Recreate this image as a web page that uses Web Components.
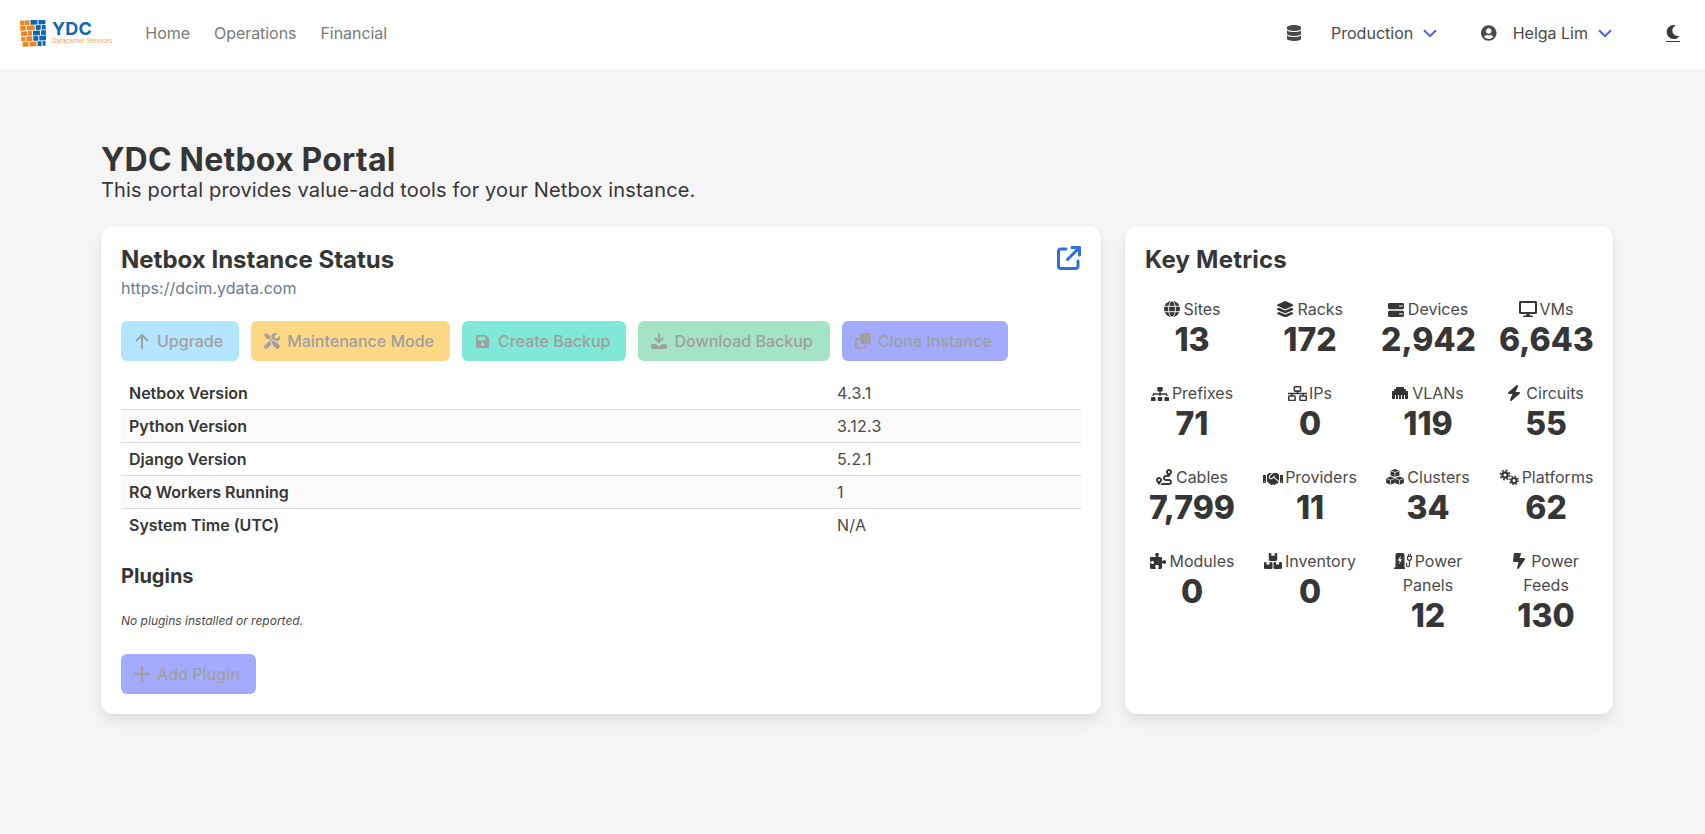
<!DOCTYPE html>
<html>
<head>
<meta charset="utf-8">
<title>YDC Netbox Portal</title>
<style>
  html, body { margin: 0; height: 100%; background: #f5f5f5; }
  body { font-family: Inter, "Liberation Sans", sans-serif; font-size: 16px; color: #363636; }
</style>
</head>
<body>
<ydc-navbar></ydc-navbar>
<ydc-page></ydc-page>

<script>
const ICONS = {
  database: ['0 0 448 512', '<path d="M448 73.143v45.714C448 159.143 347.667 192 224 192S0 159.143 0 118.857V73.143C0 32.857 100.333 0 224 0s224 32.857 224 73.143zM448 176v102.857C448 319.143 347.667 352 224 352S0 319.143 0 278.857V176c48.125 33.143 136.208 48.572 224 48.572S399.874 209.143 448 176zm0 160v102.857C448 479.143 347.667 512 224 512S0 479.143 0 438.857V336c48.125 33.143 136.208 48.572 224 48.572S399.874 369.143 448 336z"/>'],
  user: ['0 0 496 512', '<path d="M248 8C111 8 0 119 0 256s111 248 248 248 248-111 248-248S385 8 248 8zm0 96c48.6 0 88 39.4 88 88s-39.4 88-88 88-88-39.4-88-88 39.4-88 88-88zm0 344c-58.7 0-111.3-26.6-146.5-68.2 18.8-35.4 55.6-59.8 98.5-59.8 2.4 0 4.8.4 7.1 1.1 13 4.2 26.6 6.9 40.9 6.9 14.3 0 28-2.7 40.9-6.9 2.3-.7 4.7-1.1 7.1-1.1 42.9 0 79.7 24.4 98.5 59.8C359.3 421.4 306.7 448 248 448z"/>'],
  moon: ['0 0 512 512', '<path d="M283.211 512c78.962 0 151.079-35.925 198.857-94.792 7.068-8.708-.639-21.43-11.562-19.35-124.203 23.654-238.262-71.576-238.262-196.954 0-72.222 38.662-138.635 101.498-174.394 9.686-5.512 7.25-20.197-3.756-22.23A258.156 258.156 0 0 0 283.211 0c-141.309 0-256 114.511-256 256 0 141.309 114.511 256 256 256z"/>'],
  chevron: ['0 0 14 9', '<path d="M1 1.200l6 6 6-6" fill="none" stroke="currentColor" stroke-width="2"/>'],
  external: ['0 0 512 512', '<path d="M320 0c-17.7 0-32 14.3-32 32s14.3 32 32 32h82.7L201.4 265.4c-12.5 12.5-12.5 32.8 0 45.3s32.8 12.5 45.3 0L448 109.3V192c0 17.7 14.3 32 32 32s32-14.3 32-32V32c0-17.7-14.3-32-32-32H320zM80 32C35.8 32 0 67.8 0 112V432c0 44.2 35.8 80 80 80H400c44.2 0 80-35.8 80-80V320c0-17.7-14.3-32-32-32s-32 14.3-32 32V432c0 8.8-7.2 16-16 16H80c-8.8 0-16-7.2-16-16V112c0-8.8 7.2-16 16-16H192c17.7 0 32-14.3 32-32s-14.3-32-32-32H80z"/>'],
  up: ['0 0 14 16', '<path d="M7 15V2M1.500 7.500L7 2l5.500 5.500" fill="none" stroke="currentColor" stroke-width="2" stroke-linecap="round" stroke-linejoin="round"/>'],
  plus: ['0 0 14 14', '<path d="M7 1v12M1 7h12" fill="none" stroke="currentColor" stroke-width="2" stroke-linecap="round"/>'],
  tools: ['0 0 512 512', '<path d="M501.1 395.7L384 278.6c-23.1-23.1-57.6-27.6-85.4-13.9L192 158.1V96L64 0 0 64l96 128h62.1l106.6 106.6c-13.6 27.8-9.2 62.3 13.9 85.4l117.1 117.1c14.6 14.6 38.2 14.6 52.7 0l52.7-52.7c14.5-14.6 14.5-38.2 0-52.7zM331.7 225c28.3 0 54.9 11 74.9 31l19.4 19.4c15.8-6.9 30.8-16.5 43.8-29.5 37.1-37.1 49.7-89.3 37.9-136.7-2.2-9-13.5-12.1-20.1-5.5l-74.4 74.4-67.9-11.3L334 98.9l74.4-74.4c6.6-6.6 3.4-17.9-5.7-20.2-47.4-11.7-99.6.9-136.6 37.9-28.5 28.5-41.9 66.1-41.2 103.6l82.1 82.1c8.1-1.9 16.5-2.9 24.7-2.9zm-103.9 82l-56.7-56.7L18.7 402.8c-25 25-25 65.5 0 90.5s65.5 25 90.5 0l123.6-123.6c-7.6-19.9-9.9-41.6-5-62.7zM64 472c-13.2 0-24-10.8-24-24 0-13.3 10.7-24 24-24s24 10.7 24 24c0 13.2-10.7 24-24 24z"/>'],
  save: ['0 0 448 512', '<path d="M433.941 129.941l-83.882-83.882A48 48 0 0 0 316.118 32H48C21.49 32 0 53.49 0 80v352c0 26.51 21.49 48 48 48h352c26.51 0 48-21.49 48-48V163.882a48 48 0 0 0-14.059-33.941zM224 416c-35.346 0-64-28.654-64-64 0-35.346 28.654-64 64-64s64 28.654 64 64c0 35.346-28.654 64-64 64zm96-304.52V212c0 6.627-5.373 12-12 12H76c-6.627 0-12-5.373-12-12V108c0-6.627 5.373-12 12-12h228.52c3.183 0 6.235 1.264 8.485 3.515l3.48 3.48A11.996 11.996 0 0 1 320 111.48z"/>'],
  download: ['0 0 16 16', '<path d="M8 .5v8M4.400 5.500L8 9.200l3.600-3.700" fill="none" stroke="currentColor" stroke-width="1.800" stroke-linecap="round" stroke-linejoin="round"/><path d="M1.500 11h3.300l1.700 1.600a2.100 2.100 0 0 0 3 0l1.700-1.600h3.300c.8 0 1.500.7 1.500 1.500v2c0 .8-.7 1.500-1.500 1.500h-13C.7 16 0 15.300 0 14.500v-2C0 11.700.7 11 1.500 11z"/>'],
  clone: ['0 0 512 512', '<path d="M288 448H64V224h64V160H64c-35.3 0-64 28.7-64 64V448c0 35.3 28.7 64 64 64H288c35.3 0 64-28.7 64-64V384H288v64zm-64-96H448c35.3 0 64-28.7 64-64V64c0-35.3-28.7-64-64-64H224c-35.3 0-64 28.700-64 64V288c0 35.3 28.700 64 64 64z"/>'],
  globe: ['0 0 16 16', '<circle cx="8" cy="8" r="8"/><g fill="none" stroke="#fff" stroke-width=".9"><ellipse cx="8" cy="8" rx="3.400" ry="8"/><path d="M0 5.300h16M0 10.700h16"/></g>'],
  layers: ['0 0 512 512', '<path d="M12.410 148.020l232.940 105.670c6.800 3.090 14.490 3.090 21.290 0l232.940-105.670c16.550-7.510 16.550-32.520 0-40.030L266.650 2.310a25.607 25.607 0 0 0-21.290 0L12.410 107.980c-16.550 7.510-16.550 32.530 0 40.040zm487.180 88.280l-58.090-26.330-161.640 73.270c-7.560 3.430-15.590 5.170-23.860 5.170s-16.290-1.740-23.860-5.170L70.510 209.970l-58.100 26.330c-16.550 7.500-16.550 32.500 0 40l232.940 105.590c6.800 3.080 14.490 3.080 21.290 0L499.590 276.300c16.550-7.500 16.550-32.500 0-40zm0 127.800l-57.870-26.230-161.860 73.370c-7.560 3.430-15.590 5.170-23.860 5.170s-16.290-1.740-23.860-5.170L70.290 337.870 12.410 364.100c-16.550 7.500-16.550 32.500 0 40l232.940 105.590c6.800 3.080 14.490 3.080 21.290 0L499.590 404.100c16.550-7.500 16.550-32.500 0-40z"/>'],
  server: ['0 0 16 14', '<rect y="0" width="16" height="6.200" rx="1.400"/><rect y="7.800" width="16" height="6.200" rx="1.400"/><g fill="#fff"><circle cx="12" cy="3.100" r=".8"/><circle cx="14" cy="3.100" r=".8"/><circle cx="12" cy="10.900" r=".8"/><circle cx="14" cy="10.900" r=".8"/></g>'],
  desktop: ['0 0 576 512', '<path d="M528 0H48C21.500 0 0 21.500 0 48v320c0 26.500 21.500 48 48 48h192l-16 48h-72c-13.300 0-24 10.700-24 24s10.700 24 24 24h272c13.300 0 24-10.700 24-24s-10.700-24-24-24h-72l-16-48h192c26.500 0 48-21.500 48-48V48c0-26.500-21.500-48-48-48zm-16 352H64V64h448v288z"/>'],
  sitemap: ['0 0 640 512', '<path d="M128 352H32c-17.670 0-32 14.330-32 32v96c0 17.670 14.330 32 32 32h96c17.670 0 32-14.330 32-32v-96c0-17.670-14.330-32-32-32zm-24-80h192v48h48v-48h192v48h48v-57.590c0-21.170-17.230-38.410-38.410-38.410H344v-64h40c17.670 0 32-14.330 32-32V32c0-17.670-14.330-32-32-32H256c-17.670 0-32 14.330-32 32v96c0 17.670 14.330 32 32 32h40v64H94.410C73.230 224 56 241.230 56 262.410V320h48v-48zm264 80h-96c-17.670 0-32 14.330-32 32v96c0 17.670 14.330 32 32 32h96c17.670 0 32-14.330 32-32v-96c0-17.670-14.330-32-32-32zm240 0h-96c-17.670 0-32 14.330-32 32v96c0 17.670 14.330 32 32 32h96c17.670 0 32-14.330 32-32v-96c0-17.670-14.330-32-32-32z"/>'],
  network: ['0 0 20 16', '<g fill="none" stroke="currentColor" stroke-width="1.600"><rect x="6.700" y=".8" width="6.600" height="4.600" rx=".6"/><rect x=".8" y="10.600" width="6.600" height="4.600" rx=".6"/><rect x="12.600" y="10.600" width="6.600" height="4.600" rx=".6"/><path d="M10 5.300V8M4 10.700V8h12v2.700M0 8h20"/></g>'],
  ethernet: ['0 0 512 512', '<path d="M496 192h-48v-48c0-8.800-7.200-16-16-16h-48V80c0-8.800-7.200-16-16-16H144c-8.800 0-16 7.200-16 16v48H80c-8.800 0-16 7.200-16 16v48H16c-8.800 0-16 7.200-16 16v224c0 8.800 7.200 16 16 16h80V320h32v128h64V320h32v128h64V320h32v128h64V320h32v128h80c8.800 0 16-7.200 16-16V208c0-8.800-7.200-16-16-16z"/>'],
  bolt: ['32 0 384 512', '<path d="M349.400 44.600c5.900-13.700 1.500-29.700-10.600-38.500s-28.600-8-39.900 1.800l-256 224c-10 8.800-13.600 22.900-8.900 35.300S50.700 288 64 288H175.500L98.600 467.400c-5.900 13.700-1.500 29.700 10.600 38.500s28.600 8 39.900-1.800l256-224c10-8.800 13.600-22.900 8.900-35.300s-16.600-20.700-30-20.700H272.500L349.400 44.600z"/>'],
  boltfeed: ['0 0 384 512', '<path d="M0 256L28.500 28c2-16 15.600-28 31.800-28H228.900c15 0 27.100 12.100 27.100 27.100c0 3.200-.6 6.500-1.700 9.500L208 160H347.300c20.200 0 36.700 16.400 36.700 36.700c0 7.400-2.200 14.600-6.400 20.700l-192.200 281c-5.900 8.600-15.600 13.700-25.900 13.700h-2.900c-15.700 0-28.500-12.800-28.500-28.500c0-2.300 .3-4.600 .9-6.900L176 288H32c-17.700 0-32-14.300-32-32z"/>'],
  route: ['0 0 512 512', '<path d="M416 320h-96c-17.600 0-32-14.400-32-32s14.400-32 32-32h96s96-107 96-160-43-96-96-96-96 43-96 96c0 25.500 22.200 63.400 45.300 96H320c-52.900 0-96 43.100-96 96s43.100 96 96 96h96c17.600 0 32 14.400 32 32s-14.400 32-32 32H185.500c-16 24.800-33.800 47.700-47.300 64H416c52.900 0 96-43.100 96-96s-43.100-96-96-96zm0-256c17.700 0 32 14.300 32 32s-14.300 32-32 32-32-14.300-32-32 14.300-32 32-32zM96 256c-53 0-96 43-96 96s96 160 96 160 96-107 96-160-43-96-96-96zm0 128c-17.700 0-32-14.300-32-32s14.300-32 32-32 32 14.300 32 32-14.300 32-32 32z"/>'],
  handshake: ['0 64 640 384', '<path d="M434.700 64h-85.900c-8 0-15.700 3-21.600 8.400l-98.300 90c-.1.1-.2.3-.3.4-16.600 15.600-16.300 40.500-2.100 56 12.700 13.900 39.400 17.600 56.100 2.700.1-.1.300-.1.400-.2l79.900-73.200c6.500-5.900 16.700-5.500 22.600 1 6 6.500 5.500 16.600-1 22.600l-26.100 23.900L504 313.800c2.900 2.400 5.500 5 7.900 7.700V128l-54.600-54.600c-5.900-6-14.100-9.400-22.600-9.400zM544 128.200v223.900c0 17.700 14.300 32 32 32h64V128.200h-96zm48 223.900c-8.800 0-16-7.200-16-16s7.200-16 16-16 16 7.200 16 16-7.200 16-16 16zM0 384h64c17.700 0 32-14.300 32-32V128.200H0V384zm48-63.900c8.800 0 16 7.200 16 16s-7.200 16-16 16-16-7.200-16-16c0-8.900 7.200-16 16-16zm435.900 18.600L334.600 217.500l-30 27.500c-29.700 27.100-75.200 24.500-101.700-4.400-26.900-29.400-24.800-74.900 4.400-101.700L289.100 64h-83.800c-8.500 0-16.600 3.400-22.600 9.400L128 128v223.900h18.300l90.500 81.900c27.400 22.300 67.700 18.100 90-9.300l.2-.2 17.900 15.500c15.900 13 39.400 10.500 52.300-5.400l31.400-38.600 5.400 4.400c13.700 11.100 33.900 9.100 45-4.700l9.500-11.700c11.200-13.800 9.100-33.900-4.600-45.100z"/>'],
  cubes: ['0 0 18 16', '<path d="M9 0l4.400 1.700v4.700L9 8.100 4.600 6.400V1.700z"/><path d="M4.500 7.600l4.400 1.700V14l-4.400 1.800L.1 14V9.300z"/><path d="M13.500 7.600l4.400 1.700V14l-4.400 1.800L9.100 14V9.300z"/><path d="M4.800 1.900L9 3.500l4.200-1.600M9 3.500v4.600M.3 9.500l4.200 1.600 4.200-1.600M4.500 11.100v4.700M9.300 9.500l4.200 1.600 4.200-1.600M13.500 11.100v4.700" fill="none" stroke="#fff" stroke-width=".7"/>'],
  cogs: ['0 0 20 16', '<g fill="none" stroke="currentColor"><circle cx="6" cy="6" r="2.700" stroke-width="2.200"/><circle cx="6" cy="6" r="4.700" stroke-width="1.700" stroke-dasharray="1.850 1.840"/><circle cx="15" cy="11.500" r="2.500" stroke-width="2"/><circle cx="15" cy="11.500" r="4.200" stroke-width="1.500" stroke-dasharray="1.650 1.650"/></g>'],
  puzzle: ['0 0 512 512', '<path d="M192 104.800c0-9.200-5.800-17.300-13.200-22.800C167.200 73.300 160 61.300 160 48c0-26.500 28.700-48 64-48s64 21.500 64 48c0 13.300-7.200 25.300-18.800 34c-7.400 5.500-13.200 13.600-13.200 22.800c0 12.800 10.400 23.200 23.200 23.200H336c26.500 0 48 21.500 48 48v56.800c0 12.800 10.400 23.200 23.200 23.200c9.200 0 17.300-5.800 22.800-13.200c8.700-11.600 20.700-18.800 34-18.800c26.500 0 48 28.700 48 64s-21.500 64-48 64c-13.300 0-25.300-7.200-34-18.800c-5.500-7.400-13.600-13.200-22.800-13.200c-12.800 0-23.200 10.400-23.200 23.200V464c0 26.500-21.500 48-48 48H279.200c-12.800 0-23.200-10.400-23.200-23.200c0-9.200 5.800-17.300 13.200-22.800c11.600-8.700 18.800-20.700 18.800-34c0-26.500-28.700-48-64-48s-64 21.500-64 48c0 13.300 7.200 25.300 18.800 34c7.400 5.500 13.200 13.600 13.200 22.800c0 12.800-10.400 23.200-23.200 23.200H48c-26.500 0-48-21.500-48-48V343.200C0 330.400 10.400 320 23.200 320c9.200 0 17.300 5.800 22.800 13.200C54.700 344.800 66.700 352 80 352c26.500 0 48-21.500 48-48s-21.500-48-48-48c-13.300 0-25.300 7.200-34 18.800C40.500 282.200 32.400 288 23.200 288C10.400 288 0 277.600 0 264.800V176c0-26.500 21.500-48 48-48H168.800c12.800 0 23.200-10.400 23.200-23.200z"/>'],
  boxes: ['0 0 18 16', '<path d="M4.800 1.200c0-.7.5-1.200 1.200-1.200h1.300v2.800h3.400V0H12c.7 0 1.200.5 1.200 1.200v5.600c0 .7-.5 1.200-1.200 1.200H6c-.7 0-1.200-.5-1.200-1.200z"/><path d="M0 10.200C0 9.500.5 9 1.200 9h1.200v2.600h3.200V9h1.700c.7 0 1.200.5 1.200 1.200v4.600c0 .7-.5 1.200-1.200 1.200H1.200C.5 16 0 15.500 0 14.800z"/><path d="M9.500 10.200c0-.7.500-1.200 1.200-1.200h1.300v2.600h3.200V9h1.600c.7 0 1.200.5 1.200 1.200v4.600c0 .7-.5 1.200-1.200 1.200h-6.100c-.7 0-1.200-.5-1.200-1.200z"/>'],
  charging: ['0 0 18 16', '<path d="M1.500 2c0-1.100.9-2 2-2h5c1.100 0 2 .9 2 2v12.500h.5V16H0v-1.500h1.500z"/><path d="M6.800 2.500L3.800 7.800h2l-.9 3.700 3.200-5.300h-2z" fill="#fff"/><path d="M14.500 1v2.500M16.500 1v2.500M13.500 3.500h4v1.800a2 2 0 0 1-4 0zM15.500 7v5.500c0 1.500-2.800 1.500-3 0V10" fill="none" stroke="currentColor" stroke-width="1.200"/>']
};

// small svg string for the shadow templates, icons are decoration only
const icon = (name, h, extra = '') => {
  const [box, body] = ICONS[name];
  const p = box.split(' ');
  const w = (h * p[2] / p[3]).toFixed(2);
  return `<svg xmlns="http://www.w3.org/2000/svg" viewBox="${box}" width="${w}" height="${h}" fill="currentColor" style="flex:none;${extra}">${body}</svg>`;
};

class YdcLogo extends HTMLElement {
  constructor() {
    super();
    let bricks = '';
    const blue = '#0f68ad', orange = '#f5821f';
    // brick wall, orange on the left and blue on the right
    const rows = [
      [[0.5, 4, orange], [5, 5, orange], [11, 7, blue], [19, 7, blue]],
      [[0.5, 5.500, orange], [7, 8, orange], [16, 5, blue], [22, 4, blue]],
      [[1, 6, orange], [8, 4, orange], [13, 7, blue], [21, 5, blue]],
      [[1, 4, orange], [6, 6, orange], [13, 5, blue], [19, 7, blue]],
      [[2, 6, orange], [9, 7, orange], [17, 4, blue], [22, 3, blue]]
    ];
    rows.forEach((r, i) => r.forEach(([x, w, c]) => {
      bricks += `<rect x="${x}" y="${i * 5.400}" width="${w}" height="4.700" rx=".4" fill="${c}"/>`;
    }));
    const root = this.attachShadow({ mode: 'open' });
    root.innerHTML = `
      <style>
        :host { display: flex; align-items: center; gap: 6px; }
        .txt { display: flex; flex-direction: column; }
        .name { font: 700 18px/17px Inter, sans-serif; color: #0f68ad; letter-spacing: .2px; }
        .sub { font: 400 6.300px/9px Inter, sans-serif; color: #f9a25c; white-space: nowrap; }
      </style>
      <svg width="26" height="27" viewBox="0 0 26 27"><g transform="rotate(-3 13 13)">${bricks}</g></svg>
      <div class="txt"><span class="name">YDC</span><span class="sub">Datacenter Services</span></div>`;
  }
}

class YdcNavbar extends HTMLElement {
  constructor() {
    super();
    const root = this.attachShadow({ mode: 'open' });
    root.innerHTML = `
      <style>
        :host { display: flex; align-items: center; height: 69px; background: #fff; padding: 0 25px 3px 20px; box-sizing: border-box; font: 400 16px/24px Inter, sans-serif; color: #4a4a4a; }
        .links { display: flex; gap: 24px; margin-left: 33px; color: #7a7a7a; letter-spacing: -.05px; }
        .right { margin-left: auto; display: flex; align-items: center; }
        .chev { color: #485fff; display: inline-flex; }
        .item { display: flex; align-items: center; }
        .moon { display: inline-flex; padding-bottom: 2px; border-bottom: 1px solid #363636; margin-left: 54px; color: #363636; }
      </style>
      <ydc-logo></ydc-logo>
      <div class="links"><span>Home</span><span>Operations</span><span>Financial</span></div>
      <div class="right">
        <div class="item">${icon('database', 16)}<span style="margin:0 10px 0 30px">Production</span><span class="chev">${icon('chevron', 9)}</span></div>
        <div class="item" style="margin-left:44px">${icon('user', 16)}<span style="margin:0 10px 0 16px">Helga Lim</span><span class="chev">${icon('chevron', 9)}</span></div>
        <span class="moon">${icon('moon', 14)}</span>
      </div>`;
  }
}

class YdcCard extends HTMLElement {
  constructor() {
    super();
    const root = this.attachShadow({ mode: 'open' });
    root.innerHTML = `
      <style>
        :host { display: block; background: #fff; border-radius: 12px; padding: 20px; box-sizing: border-box; box-shadow: 0 8px 16px -2px rgba(10,10,10,.1), 0 0 0 1px rgba(10,10,10,.02); }
      </style>
      <slot></slot>`;
  }
}

class YdcButton extends HTMLElement {
  constructor() {
    super();
    const root = this.attachShadow({ mode: 'open' });
    root.innerHTML = `
      <style>
        :host { display: inline-flex; align-items: center; height: 40px; padding: 0 16px 0 13px; box-sizing: border-box; border-radius: 6px; font: 500 16px/24px Inter, sans-serif; color: #a0a0a0; background: var(--bg); white-space: nowrap; }
        .ic { display: inline-flex; width: 16px; justify-content: center; margin-right: 7px; }
      </style>
      <span class="ic">${icon(this.getAttribute('icon'), +this.getAttribute('size') || 16)}</span><slot></slot>`;
  }
}

class YdcStatusRow extends HTMLElement {
  constructor() {
    super();
    const root = this.attachShadow({ mode: 'open' });
    root.innerHTML = `
      <style>
        :host { display: grid; grid-template-columns: 708px 1fr; padding: 4px 8px; line-height: 24px; border-bottom: 1px solid #dbdbdb; color: #4a4a4a; }
        :host([striped]) { background: #fafafa; }
        :host([last]) { border-bottom: 0; }
        b { font-weight: 600; color: #363636; }
        span { letter-spacing: .25px; }
      </style>
      <b>${this.getAttribute('name')}</b><span><slot></slot></span>`;
  }
}

class YdcMetric extends HTMLElement {
  constructor() {
    super();
    const n = this.getAttribute('icon');
    const root = this.attachShadow({ mode: 'open' });
    root.innerHTML = `
      <style>
        :host { display: block; padding: 12px; text-align: center; color: #4a4a4a; line-height: 24px; }
        :host([nowrap]) { padding-left: 0; padding-right: 0; }
        :host([nowrap]) .lab { white-space: nowrap; }
        svg { vertical-align: -2px; margin-right: ${this.getAttribute('gap') || 4}px; color: #363636; }
        .val { font-size: 32px; line-height: 36px; font-weight: 800; color: #363636; white-space: nowrap; margin: 1px 0 -1px; }
      </style>
      <div class="lab">${icon(n, +this.getAttribute('size') || 16)}${this.getAttribute('label')}</div>
      <div class="val"><slot></slot></div>`;
  }
}

class YdcPage extends HTMLElement {
  constructor() {
    super();
    const root = this.attachShadow({ mode: 'open' });
    root.innerHTML = `
      <style>
        :host { display: block; padding: 73px 0 0 101px; font-family: Inter, sans-serif; color: #363636; }
        h1 { margin: 0; font-size: 32px; line-height: 36px; font-weight: 700; letter-spacing: .2px; }
        .lead { font-size: 20px; line-height: 25px; margin: 0 0 23px; letter-spacing: .15px; }
        .cols { display: grid; grid-template-columns: 1000px 488px; gap: 24px; }
        h2 { margin: 0; font-size: 24px; line-height: 27px; font-weight: 700; }
        h2.km { letter-spacing: .2px; }
        h3 { margin: 0 0 24px; font-size: 20px; line-height: 22.500px; font-weight: 700; }
        .head { display: flex; justify-content: space-between; }
        .ext { color: #2f6fde; }
        .url { color: #6b7a90; line-height: 24px; margin: 2px 0 21px; letter-spacing: .05px; }
        .btns { display: flex; gap: 12px; margin-bottom: 16px; }
        .none { margin: 0 0 24px; font-size: 12px; line-height: 18px; font-style: italic; color: #4a4a4a; }
        .table { margin-bottom: 24px; }
        .grid { display: grid; grid-template-columns: repeat(4, minmax(0, 1fr)); margin: 12px -12px -12px; }
      </style>
      <h1>YDC Netbox Portal</h1>
      <p class="lead">This portal provides value-add tools for your Netbox instance.</p>
      <div class="cols">
        <ydc-card>
          <div class="head"><h2>Netbox Instance Status</h2><span class="ext">${icon('external', 24)}</span></div>
          <div class="url">https://dcim.ydata.com</div>
          <div class="btns">
            <ydc-button icon="up" style="--bg:#b3e5ff">Upgrade</ydc-button>
            <ydc-button icon="tools" style="--bg:#ffd885">Maintenance Mode</ydc-button>
            <ydc-button icon="save" size="15" style="--bg:#7fe8d6">Create Backup</ydc-button>
            <ydc-button icon="download" style="--bg:#a5e3c6;padding-right:17px">Download Backup</ydc-button>
            <ydc-button icon="clone" style="--bg:#a2abff">Clone Instance</ydc-button>
          </div>
          <div class="table">
            <ydc-status-row name="Netbox Version">4.3.1</ydc-status-row>
            <ydc-status-row name="Python Version" striped>3.12.3</ydc-status-row>
            <ydc-status-row name="Django Version">5.2.1</ydc-status-row>
            <ydc-status-row name="RQ Workers Running" striped>1</ydc-status-row>
            <ydc-status-row name="System Time (UTC)" last>N/A</ydc-status-row>
          </div>
          <h3>Plugins</h3>
          <p class="none">No plugins installed or reported.</p>
          <ydc-button icon="plus" style="--bg:#a2abff;width:135px">Add Plugin</ydc-button>
        </ydc-card>
        <ydc-card>
          <h2 class="km">Key Metrics</h2>
          <div class="grid">
            <ydc-metric icon="globe" label="Sites">13</ydc-metric>
            <ydc-metric icon="layers" size="16.500" label="Racks">172</ydc-metric>
            <ydc-metric icon="server" size="14" label="Devices">2,942</ydc-metric>
            <ydc-metric icon="desktop" gap="3" label="VMs">6,643</ydc-metric>
            <ydc-metric icon="sitemap" size="14.400" gap="3" label="Prefixes">71</ydc-metric>
            <ydc-metric icon="network" size="15.200" gap="2" label="IPs">0</ydc-metric>
            <ydc-metric icon="ethernet" label="VLANs">119</ydc-metric>
            <ydc-metric icon="bolt" gap="6" label="Circuits">55</ydc-metric>
            <ydc-metric icon="route" label="Cables">7,799</ydc-metric>
            <ydc-metric icon="handshake" size="12" gap="2" nowrap label="Providers">11</ydc-metric>
            <ydc-metric icon="cubes" gap="3" label="Clusters">34</ydc-metric>
            <ydc-metric icon="cogs" gap="3" nowrap label="Platforms">62</ydc-metric>
            <ydc-metric icon="puzzle" label="Modules">0</ydc-metric>
            <ydc-metric icon="boxes" gap="3" label="Inventory">0</ydc-metric>
            <ydc-metric icon="charging" gap="3" label="Power Panels">12</ydc-metric>
            <ydc-metric icon="boltfeed" gap="6" label="Power Feeds">130</ydc-metric>
          </div>
        </ydc-card>
      </div>`;
  }
}

customElements.define('ydc-logo', YdcLogo);
customElements.define('ydc-card', YdcCard);
customElements.define('ydc-button', YdcButton);
customElements.define('ydc-status-row', YdcStatusRow);
customElements.define('ydc-metric', YdcMetric);
customElements.define('ydc-navbar', YdcNavbar);
customElements.define('ydc-page', YdcPage);
</script>
</body>
</html>
